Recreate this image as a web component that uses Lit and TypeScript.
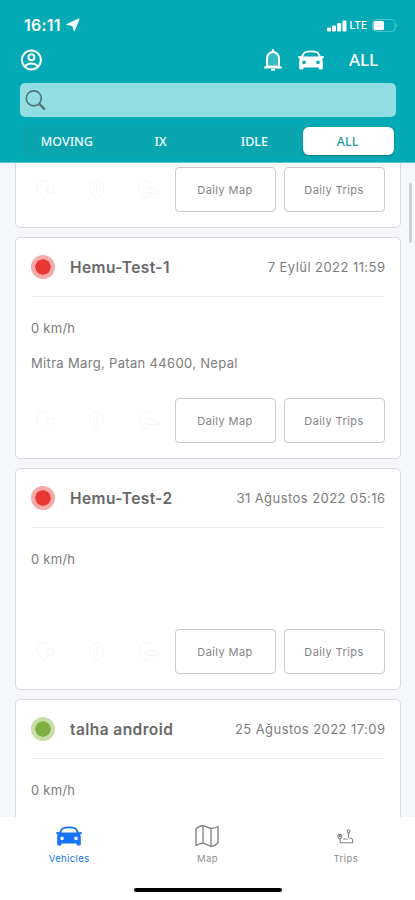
import { LitElement, html, css, svg } from "lit";
import { customElement, property } from "lit/decorators.js";
import { classMap } from "lit/directives/class-map.js";

interface Vehicle {
  name: string;
  date: string;
  address: string;
  speed: string;
  online: boolean;
}

const carIcon = html`<svg class="car" viewBox="0 0 26 20" aria-hidden="true">
  <path fill="currentColor" fill-rule="evenodd" d="M6 1.7Q13-.9 20 1.7Q21.8 3.7 22.8 6.2L25.6 6Q26 7.8 25 8.5H23.9Q24.8 9.8 24.8 11V18.2Q24.8 19.6 23.4 19.6H22Q20.5 19.6 20.5 18.2V17.4H5.5V18.2Q5.5 19.6 4 19.6H2.6Q1.2 19.6 1.2 18.2V11Q1.2 9.8 2.1 8.5H1Q0 7.8.4 6L3.2 6.2Q4.2 3.7 6 1.7ZM7.3 3Q6 4.3 5.2 6.6H20.8Q20 4.3 18.7 3Q13 1.4 7.3 3ZM6 10.6A1.8 1.8 0 1 0 6 14.2A1.8 1.8 0 1 0 6 10.6ZM20 10.6A1.8 1.8 0 1 0 20 14.2A1.8 1.8 0 1 0 20 10.6Z"/>
</svg>`;

const pin = svg`<path d="M9 2.5A7.5 7.5 0 0 1 16.5 5M8.5 3A8 8 0 0 0 7.5 15.5L12 21L15.5 17.5"/>`;

const ghostIcons = [
  html`<svg class="ghost" viewBox="0 0 28 24">${pin}<path d="M14 9h7v6h-6zM16 11v3"/></svg>`,
  html`<svg class="ghost" viewBox="0 0 28 24"><path d="M14 2.5A8 8 0 0 0 7.5 14L14 21L20 14A8 8 0 0 0 14 2.5M14 6v10M11 8v5M17 7v6"/></svg>`,
  html`<svg class="ghost" viewBox="0 0 28 24">${pin}<path d="M11 15v-3l3-2h5l3 3h4v3z"/></svg>`,
];

@customElement("vehicle-card")
export class VehicleCard extends LitElement {
  @property({ attribute: false }) vehicle!: Vehicle;

  static styles = css`
    :host {
      display: flex;
      flex-direction: column;
      flex: none;
      box-sizing: border-box;
      height: 222px;
      padding: 0 15px 15px;
      border: 1px solid #d9dbde;
      border-radius: 5px;
      background: #fff;
      color: #7c7c7c;
      font-size: 13px;
    }
    .head {
      display: flex;
      align-items: center;
      flex: none;
      height: 59px;
      box-sizing: border-box;
      border-bottom: 1px solid #ececec;
    }
    .dot {
      width: 16px;
      height: 16px;
      border: 4px solid #f5a9a8;
      border-radius: 50%;
      background: #e93733;
      background-clip: padding-box;
    }
    .dot.on {
      border-color: #c5dfa6;
      background-color: #80ae42;
    }
    .name {
      flex: 1;
      margin-left: 15px;
      font-size: 15.5px;
      font-weight: 600;
      letter-spacing: 0.42px;
      color: #686868;
      white-space: nowrap;
    }
    .date { letter-spacing: 0.44px; margin-right: -0.4px; white-space: nowrap; }
    .speed { margin-top: 22px; line-height: 18px; letter-spacing: 0.25px; }
    .address { margin-top: 17px; line-height: 18px; letter-spacing: 0.33px; }
    .actions {
      display: flex;
      align-items: center;
      margin-top: auto;
      gap: 8px;
    }
    .ghosts { display: flex; flex: 1; gap: 23px; margin-left: 1px; }
    .ghost {
      flex: none;
      width: 28px;
      height: 24px;
      fill: none;
      stroke: #f6f6f6;
      stroke-width: 1;
    }
    .btn {
      flex: none;
      width: 101px;
      height: 45px;
      box-sizing: border-box;
      padding: 0 1px 0 0;
      border: 1px solid #cbcbcb;
      border-radius: 4px;
      background: #fff;
      color: #858585;
      font: 400 11px "Inter", sans-serif;
      letter-spacing: 0.42px;
    }
    .ghosts + .btn { margin-left: -9px; }
  `;

  render() {
    const v = this.vehicle;
    return html`
      <div class="head">
        <span class=${classMap({ dot: true, on: v.online })}></span>
        <span class="name">${v.name}</span>
        <span class="date">${v.date}</span>
      </div>
      <div class="speed">${v.speed}</div>
      <div class="address">${v.address}</div>
      <div class="actions">
        <div class="ghosts">${ghostIcons}</div>
        <button class="btn">Daily Map</button>
        <button class="btn">Daily Trips</button>
      </div>
    `;
  }
}

@customElement("app-root")
export class AppRoot extends LitElement {
  private vehicles: Vehicle[] = [
    { name: "", date: "", address: "", speed: "", online: false },
    { name: "Hemu-Test-1", date: "7 Eylül 2022 11:59", address: "Mitra Marg, Patan 44600, Nepal", speed: "0 km/h", online: false },
    { name: "Hemu-Test-2", date: "31 Ağustos 2022 05:16", address: "", speed: "0 km/h", online: false },
    { name: "talha android", date: "25 Ağustos 2022 17:09", address: "", speed: "0 km/h", online: true },
  ];

  static styles = css`
    :host {
      display: flex;
      flex-direction: column;
      position: relative;
      height: 900px;
      overflow: hidden;
      background: #f6f7fb;
      font-family: "Inter", sans-serif;
    }
    .header {
      flex: none;
      box-sizing: border-box;
      height: 163px;
      padding: 15px 19px 0 20px;
      background: #02aab5;
      border-bottom: 1px solid #5fc4cc;
      color: #fff;
    }
    .status { display: flex; align-items: center; height: 20px; padding: 0 0 0 4px; }
    .time { font-size: 16px; font-weight: 600; letter-spacing: 0.2px; }
    .arrow { width: 14px; height: 14px; margin-left: 5px; flex: none; }
    .signal { width: 20px; height: 13px; margin-left: auto; }
    .lte { margin: 0 5px 0 3px; font-size: 10px; font-weight: 600; }
    .battery { width: 27px; height: 13px; margin-right: -3px; }
    .tools { display: flex; align-items: center; height: 28px; margin-top: 11px; }
    .user { width: 22px; height: 22px; }
    .bell { width: 20px; height: 24px; margin-left: auto; }
    .header .car { width: 26px; height: 20px; margin-left: 15px; }
    .all { margin: -2px 18px 0 25px; font: 500 17px "Noto Sans", sans-serif; letter-spacing: -0.1px; }
    .search {
      display: flex;
      align-items: center;
      height: 34px;
      margin-top: 9px;
      padding-left: 5px;
      box-sizing: border-box;
      border-radius: 5px;
      background: #91dfe2;
    }
    .lens { width: 21px; height: 21px; }
    .tabs {
      display: grid;
      grid-template-columns: repeat(4, 1fr);
      align-items: center;
      height: 32px;
      margin-top: 8px;
      padding-right: 1px;
      border-radius: 6px;
      background: #0aa6b0;
    }
    .tab {
      display: flex;
      align-items: center;
      justify-content: center;
      height: 28px;
      margin: 0 1px;
      border-radius: 6px;
      font: 500 12.5px "Noto Sans", sans-serif;
      letter-spacing: 0;
      color: #effdfd;
    }
    .tab.active { margin-left: 2px; padding-right: 2px; background: #fff; color: #259aa3; box-shadow: 0 1px 2px rgba(0, 60, 70, 0.35); }
    .list { flex: 1; min-height: 0; overflow: hidden; }
    .scroll {
      display: flex;
      flex-direction: column;
      gap: 9px;
      margin: -157px 14px 0 15px;
    }
    .thumb {
      position: absolute;
      right: 3px;
      top: 183px;
      width: 3px;
      height: 60px;
      border-radius: 2px;
      background: #cfd0d4;
    }
    .nav { flex: none; height: 83px; background: #fff; display: flex; flex-direction: column; align-items: center; }
    .items { display: grid; grid-template-columns: repeat(3, 1fr); width: 100%; height: 70px; }
    .item {
      display: flex;
      flex-direction: column;
      align-items: center;
      padding-top: 6px;
      color: #8d8d8d;
      font-size: 9.5px;
      font-weight: 400;
      letter-spacing: 0.4px;
    }
    .item.active { color: #1673f5; }
    .glyph { display: flex; align-items: center; justify-content: center; height: 26px; margin-bottom: 4px; }
    .glyph .car { width: 26px; height: 20px; }
    .mapicon { width: 26px; height: 24px; }
    .tripicon { width: 17px; height: 15px; }
    .home { width: 148px; height: 4px; margin-top: 1px; border-radius: 2px; background: #000; }
  `;

  render() {
    return html`
      <header class="header">
        <div class="status">
          <span class="time">16:11</span>
          <svg class="arrow" viewBox="0 0 14 14"><path fill="#fff" d="M13 1L8.2 12.6L6.8 7.4L.9 6.5Z" stroke="#fff" stroke-width="1.2" stroke-linejoin="round"/></svg>
          <svg class="signal" viewBox="0 0 20 13" fill="#fff">
            <rect x="0" y="8.5" width="4" height="4" rx="1"/><rect x="5" y="6.5" width="4" height="6" rx="1"/>
            <rect x="10.2" y="4" width="4" height="8.5" rx="1"/><rect x="15.5" y="1.5" width="4" height="11" rx="1"/>
          </svg>
          <span class="lte">LTE</span>
          <svg class="battery" viewBox="0 0 27 13">
            <rect x=".5" y=".5" width="22.5" height="12" rx="3.5" fill="none" stroke="#4fc2ca"/>
            <rect x="1.5" y="2" width="10.5" height="9" rx="1.5" fill="#fff"/>
            <path d="M24.3 4.5Q26.2 6.5 24.3 8.5Z" fill="#63c9d0"/>
          </svg>
        </div>
        <div class="tools">
          <svg class="user" viewBox="0 0 22 22" fill="none" stroke="#fff" stroke-width="2">
            <circle cx="11.4" cy="11" r="9.5"/><circle cx="11.4" cy="8.3" r="3"/><path d="M5 17.3Q7.5 14.6 11.4 14.6T17.8 17.3"/>
          </svg>
          <svg class="bell" viewBox="0 0 20 24">
            <path d="M4 18.5V10.5A6 6.5 0 0 1 16 10.5V18.5Z" fill="#35bcc5" stroke="#fff" stroke-width="2"/>
            <path d="M1.2 19.5H18.8M10 4V1.2" stroke="#fff" stroke-width="2.2" fill="none"/>
            <path d="M8 21H12V22.6H8Z" fill="#fff"/>
          </svg>
          ${carIcon}
          <span class="all">ALL</span>
        </div>
        <div class="search">
          <svg class="lens" viewBox="0 0 21 21" fill="none" stroke="#53777d"><circle cx="8.8" cy="8.3" r="7.5" stroke-width="1.7"/><path d="M14.1 13.6L20 19.6" stroke-width="2.5"/></svg>
        </div>
        <div class="tabs">
          ${["MOVING", "IX", "IDLE", "ALL"].map(
            (t) => html`<span class=${classMap({ tab: true, active: t === "ALL" })}>${t}</span>`
          )}
        </div>
      </header>
      <main class="list">
        <div class="scroll">
          ${this.vehicles.map((v) => html`<vehicle-card .vehicle=${v}></vehicle-card>`)}
        </div>
      </main>
      <div class="thumb"></div>
      <nav class="nav">
        <div class="items">
          <div class="item active"><span class="glyph">${carIcon}</span>Vehicles</div>
          <div class="item"><span class="glyph">
            <svg class="mapicon" viewBox="0 0 26 24" fill="none" stroke="#858585" stroke-width="1.4" stroke-linejoin="round">
              <path d="M2 5Q5 1.5 9 1.7L17 4.5Q21 4.5 24 2.5V18.5Q21 22.5 17 22.3L9 19.2Q5 19.3 2 21.5ZM9 1.7V19.2M17 4.5V22.3"/>
            </svg></span>Map</div>
          <div class="item"><span class="glyph">
            <svg class="tripicon" viewBox="0 0 17 15" fill="none" stroke="#858585" stroke-width="1.1">
              <path d="M2.8 10.5L1 8.2A2 2 0 1 1 4.6 8.2ZM11.5 5L10.4 2.8A1.3 1.3 0 1 1 12.6 2.8ZM11.5 5V9M6 10H10.5M12 9Q15.6 9 15.6 11.5V13.7H3.2V11"/>
              <circle cx="2.8" cy="7.2" r=".6"/>
            </svg></span>Trips</div>
        </div>
        <div class="home"></div>
      </nav>
    `;
  }
}
